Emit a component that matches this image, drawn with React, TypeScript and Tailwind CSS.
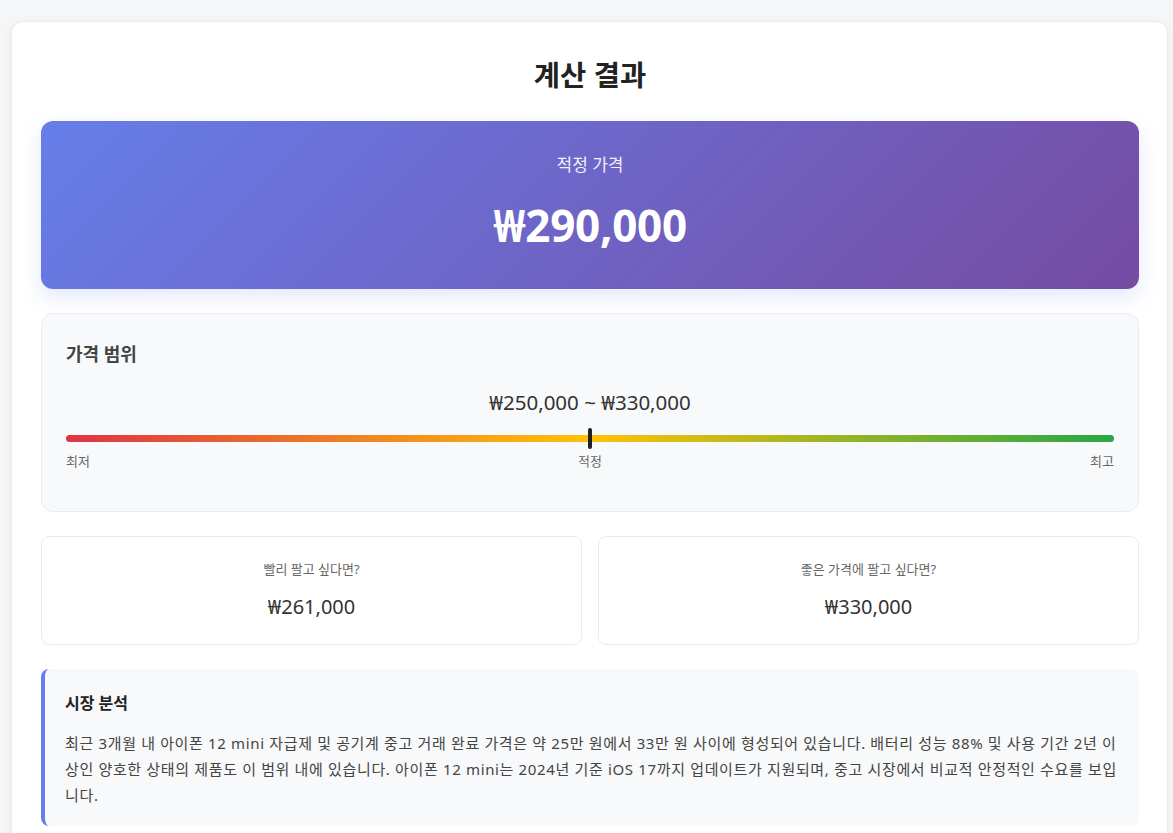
const font = { fontFamily: '"Noto Sans", "Noto Sans CJK KR", sans-serif' };

const App = () => {
  const low = 250000;
  const high = 330000;
  const fair = 290000;
  const pos = ((fair - low) / (high - low)) * 100;

  return (
    <div className="min-h-screen bg-[#f5f6f8] pl-[11px] pr-[5px] pt-[21px]" style={font}>
      <div className="bg-white rounded-xl shadow-[0_2px_10px_rgba(0,0,0,0.06)] border border-[#ececef] pl-[29px] pr-[28px] pt-[33px] pb-[30px]">
        <h1 className="text-center text-[28.5px] font-bold text-[#222] leading-[40px] mb-[26px]">계산 결과</h1>

        <div className="rounded-xl bg-[linear-gradient(135deg,#667eea_0%,#764ba2_100%)] shadow-[0_8px_20px_rgba(102,126,234,0.18)] h-[168px] flex flex-col items-center pt-[30px] text-white">
          <div className="text-[17px] opacity-90 leading-[28px]">적정 가격</div>
          <div className="text-[44px] font-bold leading-[60px] mt-[16px] tracking-[-0.3px]">₩290,000</div>
        </div>

        <div className="mt-6 rounded-xl bg-[#f8f9fa] border border-[#e9ecef] px-[24px] pt-[26px] pb-[40px]">
          <h3 className="text-[18px] font-semibold text-[#444] leading-[28px]">가격 범위</h3>
          <div className="text-center text-[20.5px] text-[#333] leading-[30px] mt-[19px]">₩250,000 ~ ₩330,000</div>
          <div className="relative mt-[18px] h-[7px] rounded-full bg-[linear-gradient(90deg,#dc3545_0%,#ffc107_50%,#28a745_100%)]">
            <div
              className="absolute top-[-7px] w-[4px] h-[21px] rounded-sm bg-[#222]"
              style={{ left: `calc(${pos}% - 2px)` }}
            />
          </div>
          <div className="flex justify-between text-[13px] text-[#666] leading-[20px] mt-[9px]">
            <span>최저</span>
            <span>적정</span>
            <span>최고</span>
          </div>
        </div>

        <div className="mt-6 grid grid-cols-2 gap-4">
          <div className="bg-white border border-[#e9ecef] rounded-lg h-[109px] flex flex-col items-center pt-[21px]">
            <div className="text-[13px] text-[#666] leading-[22px]">빨리 팔고 싶다면?</div>
            <div className="text-[20px] text-[#333] leading-[30px] mt-[12px]">₩261,000</div>
          </div>
          <div className="bg-white border border-[#e9ecef] rounded-lg h-[109px] flex flex-col items-center pt-[21px]">
            <div className="text-[13px] text-[#666] leading-[22px]">좋은 가격에 팔고 싶다면?</div>
            <div className="text-[20px] text-[#333] leading-[30px] mt-[12px]">₩330,000</div>
          </div>
        </div>

        <div className="mt-6 rounded-lg bg-[#f8f9fa] border-l-4 border-[#667eea] pl-[20px] pr-[20px] pt-[20px] pb-[18px]">
          <h4 className="text-[16px] font-bold text-[#222] leading-[28px]">시장 분석</h4>
          <p className="text-[15px] text-[#444] leading-[26px] mt-[13px] tracking-[0.65px]">
            최근 3개월 내 아이폰 12 mini 자급제 및 공기계 중고 거래 완료 가격은 약 25만 원에서 33만 원 사이에 형성되어 있습니다. 배터리 성능 88% 및 사용 기간 2년 이상인 양호한 상태의 제품도 이 범위 내에 있습니다. 아이폰 12 mini는 2024년 기준 iOS 17까지 업데이트가 지원되며, 중고 시장에서 비교적 안정적인 수요를 보입니다.
          </p>
        </div>
      </div>
    </div>
  );
};

export default App;
